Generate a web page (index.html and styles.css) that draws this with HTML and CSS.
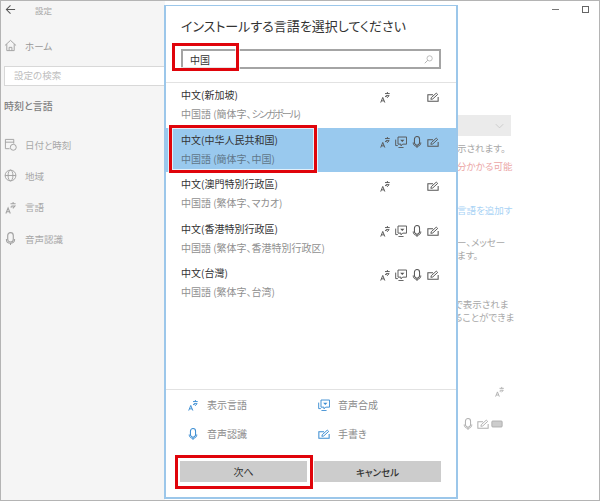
FILE: index.html
```html
<!DOCTYPE html>
<html lang="ja">
<head>
    <meta charset="UTF-8">
    <title>設定</title>
    <link rel="stylesheet" href="styles.css">
</head>
<body>
    <svg class="sprites" width="0" height="0">
        <symbol id="i-lang" viewBox="0 0 14 14">
            <path d="M2 13.500 4.400 7.500 6.800 13.500M2.900 11.500h3" fill="none" stroke="currentColor" stroke-width="1.100"/>
            <path d="M7 3h5.500M9.800 1.200v1.800M8 5.400h3.800L9.500 8M7 6.500h2" fill="none" stroke="currentColor" stroke-width="1.100"/>
        </symbol>
        <symbol id="i-speech" viewBox="0 0 14 14">
            <path d="M3.500 1.200h10v8.300H9L7 11.500v-2H3.500z" fill="none" stroke="currentColor" stroke-width="1.100"/>
            <path d="M.8 4.200v7h2.500M4 13.500h6" fill="none" stroke="currentColor" stroke-width="1.100"/>
            <path d="M6 4.500h5L8.500 7z" fill="currentColor"/>
        </symbol>
        <symbol id="i-mic" viewBox="0 0 14 14">
            <rect x="4" y=".7" width="6" height="10" rx="3" fill="none" stroke="currentColor" stroke-width="1.200"/>
            <path d="M2.600 7.500v.8c0 5 8.800 5 8.800 0v-.8M7 12.300V14" fill="none" stroke="currentColor" stroke-width="1.100"/>
        </symbol>
        <symbol id="i-hand" viewBox="0 0 14 14">
            <path d="M7 4.500H1v7.500h12V7" fill="none" stroke="currentColor" stroke-width="1.200"/>
            <path d="M4.500 9.700 5 7.800 10.800 2.500 12.500 4 6.700 9.300z" fill="none" stroke="currentColor" stroke-width="1.100"/>
        </symbol>
    </svg>

    <div class="window">
        <aside class="sidebar">
            <div class="title-row">
                <svg class="icon-back" viewBox="0 0 12 12"><path d="M11 6H1.500M6 1.500 1.500 6 6 10.500" fill="none" stroke="currentColor" stroke-width="1.100"/></svg>
                <span>設定</span>
            </div>
            <div class="nav-item home">
                <svg class="nav-icon" viewBox="0 0 14 14"><path d="M1 7 7 1.500 13 7M3 5.500V12.500h8V5.500M5.500 12.500V9h3v3.500" fill="none" stroke="currentColor"/></svg>
                <span>ホーム</span>
            </div>
            <div class="side-search">設定の検索</div>
            <div class="side-heading">時刻と言語</div>
            <nav class="nav-list">
                <div class="nav-item">
                    <svg class="nav-icon" viewBox="0 0 14 14"><path d="M6 11.500H1.500v-10h9V6M1.500 4.500h9" fill="none" stroke="currentColor"/><circle cx="10" cy="10" r="3.200" fill="none" stroke="currentColor"/></svg>
                    <span>日付と時刻</span>
                </div>
                <div class="nav-item">
                    <svg class="nav-icon" viewBox="0 0 14 14"><circle cx="7" cy="7" r="5.800" fill="none" stroke="currentColor"/><ellipse cx="7" cy="7" rx="2.600" ry="5.800" fill="none" stroke="currentColor"/><path d="M1.200 7h11.600" stroke="currentColor"/></svg>
                    <span>地域</span>
                </div>
                <div class="nav-item">
                    <svg class="nav-icon"><use href="#i-lang"/></svg>
                    <span>言語</span>
                </div>
                <div class="nav-item">
                    <svg class="nav-icon"><use href="#i-mic"/></svg>
                    <span>音声認識</span>
                </div>
            </nav>
        </aside>

        <main class="content">
            <div class="win-controls">
                <span class="win-min"></span>
                <span class="win-max"></span>
            </div>
            <div class="select-box">
                <svg class="chevron" viewBox="0 0 12 8"><path d="M1 1.500 6 6.500 11 1.500" fill="none" stroke="currentColor"/></svg>
            </div>
            <p class="line first">示されます。</p>
            <p class="line warn">分かかる可能</p>
            <p class="line link">言語を追加す</p>
            <p class="line msg">ー、メッセー</p>
            <p class="line">ます。</p>
            <p class="line block-gap cut">で表示されま</p>
            <p class="line cut">ることができま</p>
            <svg class="bg-lang"><use href="#i-lang"/></svg>
            <div class="bg-icons">
                <svg><use href="#i-mic"/></svg>
                <svg><use href="#i-hand"/></svg>
                <svg viewBox="0 0 14 14"><rect x="1" y="3.500" width="12" height="7" rx="1" fill="#ccc" stroke="#aaa"/></svg>
            </div>
        </main>
    </div>

    <section class="dialog">
        <h1 class="dialog-title">インストールする言語を選択してください</h1>
        <div class="search-box">
            <span>中国</span>
            <svg class="search-icon" viewBox="0 0 12 12"><circle cx="7.500" cy="4.500" r="3.500" fill="none" stroke="currentColor"/><path d="M5 7 1 11" stroke="currentColor" stroke-width="1.200"/></svg>
        </div>

        <ul class="lang-list">
            <li class="lang-row">
                <div class="lang-text"><div class="lang-name">中文(新加坡)</div><div class="lang-sub">中国語 (簡体字、<span class="kana">シンガポール</span>)</div></div>
                <div class="lang-icons">
                    <svg><use href="#i-lang"/></svg><i></i><i></i><svg><use href="#i-hand"/></svg>
                </div>
            </li>
            <li class="lang-row selected">
                <div class="lang-text"><div class="lang-name">中文(中华人民共和国)</div><div class="lang-sub">中国語 (簡体字、中国)</div></div>
                <div class="lang-icons">
                    <svg><use href="#i-lang"/></svg><svg><use href="#i-speech"/></svg><svg><use href="#i-mic"/></svg><svg><use href="#i-hand"/></svg>
                </div>
            </li>
            <li class="lang-row">
                <div class="lang-text"><div class="lang-name">中文(澳門特別行政區)</div><div class="lang-sub">中国語 (繁体字、マカオ)</div></div>
                <div class="lang-icons">
                    <svg><use href="#i-lang"/></svg><i></i><i></i><svg><use href="#i-hand"/></svg>
                </div>
            </li>
            <li class="lang-row">
                <div class="lang-text"><div class="lang-name">中文(香港特別行政區)</div><div class="lang-sub">中国語 (繁体字、香港特別行政区)</div></div>
                <div class="lang-icons">
                    <svg><use href="#i-lang"/></svg><svg><use href="#i-speech"/></svg><svg><use href="#i-mic"/></svg><svg><use href="#i-hand"/></svg>
                </div>
            </li>
            <li class="lang-row">
                <div class="lang-text"><div class="lang-name">中文(台灣)</div><div class="lang-sub">中国語 (繁体字、台湾)</div></div>
                <div class="lang-icons">
                    <svg><use href="#i-lang"/></svg><svg><use href="#i-speech"/></svg><svg><use href="#i-mic"/></svg><svg><use href="#i-hand"/></svg>
                </div>
            </li>
        </ul>

        <div class="legend">
            <div class="legend-item"><svg><use href="#i-lang"/></svg>表示言語</div>
            <div class="legend-item"><svg><use href="#i-speech"/></svg>音声合成</div>
            <div class="legend-item"><svg><use href="#i-mic"/></svg>音声認識</div>
            <div class="legend-item"><svg><use href="#i-hand"/></svg>手書き</div>
        </div>

        <div class="dialog-buttons">
            <button class="btn">次へ</button>
            <button class="btn btn-cancel">キャンセル</button>
        </div>
    </section>

    <!-- 赤枠の注釈 -->
    <div class="mark mark-search"></div>
    <div class="mark mark-row"></div>
    <div class="mark mark-next"></div>
</body>
</html>
```

FILE: styles.css
```css
* {
    box-sizing: border-box;
}

body {
    margin: 0;
    width: 600px;
    height: 501px;
    position: relative;
    overflow: hidden;
    background: white;
    font-family: "Noto Sans CJK JP", "Noto Sans", sans-serif;
    font-feature-settings: "palt";
    font-size: 9.5px;
    color: #333;
}

.sprites {
    position: absolute;
}

.window {
    display: flex;
    width: 600px;
    height: 501px;
    border: 1px solid #b4b4b4;
}

/* 左側のメニュー */
.sidebar {
    width: 164px;
    background: #f5f5f5;
    color: #a8a8a8;
    overflow: hidden;
}

.title-row {
    display: flex;
    align-items: center;
    height: 17px;
    padding-left: 4px;
    font-size: 8.5px;
}

.icon-back {
    width: 11px;
    height: 11px;
    margin-right: 19px;
    color: #555;
}

.nav-item {
    display: flex;
    align-items: center;
    height: 31.300px;
    padding-left: 3px;
}

.nav-item.home {
    margin-top: 12px;
    height: 31px;
    color: #999;
}

.nav-icon {
    width: 13px;
    height: 13px;
    margin-right: 8px;
    color: #a0a0a0;
}

.side-search {
    margin: 5px 0 0 3px;
    height: 20px;
    padding-left: 9px;
    line-height: 17px;
    background: white;
    border: 1px solid #d8d8d8;
    border-right: none;
    color: #c0c0c0;
}

.side-heading {
    margin: 10px 0 0 3px;
    font-size: 10px;
    font-weight: 500;
    line-height: 20px;
    color: #808080;
}

.nav-list {
    margin-top: 13px;
}

/* 右側の設定画面 (ダイアログの裏) */
.content {
    flex: 1;
    padding-left: 292px;
    color: #a8a8a8;
    position: relative;
}

.win-controls {
    display: flex;
    justify-content: flex-end;
    align-items: center;
    gap: 23px;
    height: 17px;
    padding-right: 10px;
}

.win-min {
    width: 7px;
    border-top: 1px solid #777;
}

.win-max {
    width: 7px;
    height: 7px;
    border: 1px solid #666;
}

.select-box {
    display: flex;
    justify-content: flex-end;
    align-items: center;
    width: 54px;
    height: 21px;
    margin-top: 97px;
    padding-right: 7px;
    background: #ebebeb;
}

.chevron {
    width: 9px;
    height: 6px;
    color: #c4c4c4;
}

.line {
    margin: 0;
    line-height: 13px;
    white-space: nowrap;
}

.line.first {
    margin-top: 6px;
}

.line.warn {
    margin-top: 5px;
    color: #eba6a6;
}

.line.link {
    margin-top: 31px;
    color: #a9d3f5;
}

.line.msg {
    margin-top: 19px;
}

.line.block-gap {
    margin-top: 36px;
}

.line.cut {
    text-indent: -3px;
}

.bg-lang {
    display: block;
    width: 11px;
    height: 11px;
    margin: 62px 0 0 37px;
    color: #aaa;
}

.bg-icons {
    display: flex;
    gap: 2.500px;
    margin: 21px 0 0 5px;
    color: #b0b0b0;
}

.bg-icons svg {
    width: 12px;
    height: 12px;
}

/* ダイアログ */
.dialog {
    position: absolute;
    left: 164px;
    top: 5px;
    width: 294px;
    height: 494px;
    display: flex;
    flex-direction: column;
    background: white;
    border: 1px solid #9cc7ea;
    border-width: 1px 2px 2px 2px;
}

.dialog-title {
    margin: 10px 0 0 15px;
    font-size: 13px;
    font-weight: 400;
    line-height: 20px;
    color: #333;
}

.search-box {
    display: flex;
    justify-content: space-between;
    align-items: center;
    height: 20px;
    margin: 13px 15px 0;
    padding: 0 6px 0 7px;
    border: 2px solid #a4a4a4;
    font-size: 10px;
}

.search-icon {
    width: 9px;
    height: 9px;
    color: #aaa;
}

.lang-list {
    list-style: none;
    flex: 1;
    margin: 13px 0 0;
    padding: 0;
    border-top: 1px solid #e2e2e2;
}

.lang-row {
    display: flex;
    justify-content: space-between;
    height: 44.500px;
    padding: 3px 17px 0 15px;
}

.lang-row.selected {
    background: #99c9ee;
}

.lang-name {
    font-size: 10px;
    line-height: 18px;
}

.lang-sub {
    margin-top: 1px;
    font-size: 10px;
    line-height: 18px;
    color: #909090;
}

.kana {
    letter-spacing: -1.800px;
}

.selected .lang-sub {
    color: #60778a;
}

.lang-icons {
    display: grid;
    grid-template-columns: repeat(4, 12px);
    gap: 4px;
    height: 12px;
    margin-top: 5px;
    color: #555;
}

.lang-icons svg {
    width: 12px;
    height: 12px;
}

.legend {
    display: grid;
    grid-template-columns: 131px 1fr;
    grid-auto-rows: 29px;
    padding-left: 21px;
    border-top: 1px solid #e2e2e2;
}

.legend-item {
    display: flex;
    align-items: center;
    gap: 8px;
    font-size: 10px;
    color: #8c8c8c;
}

.legend-item svg {
    width: 12px;
    height: 12px;
    color: #3b8dd2;
}

.dialog-buttons {
    display: flex;
    gap: 7px;
    height: 21px;
    margin: 13px 15px 15px 14px;
}

.btn {
    flex: 1;
    border: none;
    padding: 0;
    background: #cccccc;
    font: inherit;
    font-size: 10px;
    font-feature-settings: "palt";
    color: #333;
}

.btn-cancel {
    font-size: 9.500px;
    font-weight: 500;
}

/* 赤枠 */
.mark {
    position: absolute;
    border: 3px solid #e0040b;
    box-shadow: 0 0 0 1px rgba(255, 255, 255, 0.7), inset 0 0 0 1px rgba(255, 255, 255, 0.7);
}

.mark-search {
    left: 172px;
    top: 43px;
    width: 67px;
    height: 28px;
}

.mark-row {
    left: 169px;
    top: 125px;
    width: 148px;
    height: 48px;
}

.mark-next {
    left: 175px;
    top: 455px;
    width: 138px;
    height: 34px;
}
```
